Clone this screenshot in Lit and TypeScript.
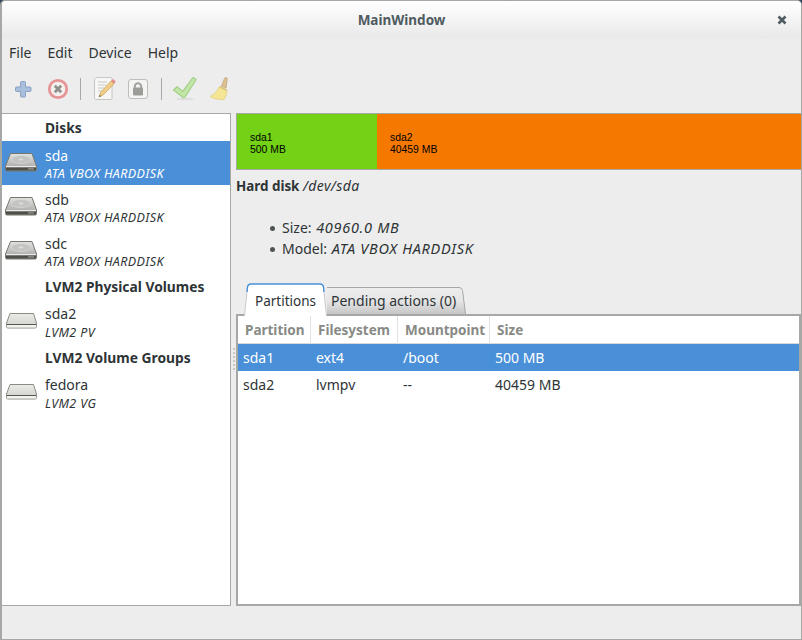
import { LitElement, html, css, svg } from 'lit';
import { customElement } from 'lit/decorators.js';

interface SideRow {
  name?: string;
  sub?: string;
  header?: string;
  icon?: 'disk' | 'volume';
  selected?: boolean;
}

const SIDE_ROWS: SideRow[] = [
  { header: 'Disks' },
  { name: 'sda', sub: 'ATA VBOX HARDDISK', icon: 'disk', selected: true },
  { name: 'sdb', sub: 'ATA VBOX HARDDISK', icon: 'disk' },
  { name: 'sdc', sub: 'ATA VBOX HARDDISK', icon: 'disk' },
  { header: 'LVM2 Physical Volumes' },
  { name: 'sda2', sub: 'LVM2 PV', icon: 'volume' },
  { header: 'LVM2 Volume Groups' },
  { name: 'fedora', sub: 'LVM2 VG', icon: 'volume' },
];

const diskIcon = html`<svg width="34" height="22" viewBox="0 0 34 22">
  <defs>
    <linearGradient id="dg" x1="0" y1="0" x2="0" y2="1">
      <stop offset="0" stop-color="#e2e3e0" />
      <stop offset="0.7" stop-color="#b4b5b2" />
      <stop offset="1" stop-color="#9c9d9a" />
    </linearGradient>
  </defs>
  <path d="M6.500 1.500H28L32.500 14v3.500a1.500 1.500 0 0 1-1.500 1.500H3a1.500 1.500 0 0 1-1.500-1.500V14z" fill="url(#dg)" stroke="#74766f" stroke-width="1" />
  <rect x="2" y="14" width="30" height="1" fill="#ebebe9" />
  <rect x="2" y="15.500" width="30" height="3" fill="#4d4f49" />
  <rect x="24" y="16.200" width="6" height="1.400" fill="#8f918c" />
  <ellipse cx="17" cy="7.500" rx="9.500" ry="4" fill="#c4c5c2" stroke="#dcdcda" stroke-width="0.600" />
  <ellipse cx="17" cy="7.500" rx="2.500" ry="1" fill="#dcdcda" />
</svg>`;

const volumeIcon = html`<svg width="34" height="22" viewBox="0 0 34 22">
  <defs>
    <linearGradient id="vg" x1="0" y1="0" x2="0" y2="1">
      <stop offset="0" stop-color="#ebebe7" />
      <stop offset="1" stop-color="#cfd0ca" />
    </linearGradient>
  </defs>
  <path d="M6 2.500h23.500l3 9.500v3.500a1.500 1.500 0 0 1-1.500 1.500H4a1.500 1.500 0 0 1-1.500-1.500V12z" fill="url(#vg)" stroke="#8b8c85" stroke-width="1" />
  <rect x="3" y="13" width="29" height="1" fill="#55574f" />
  <rect x="3" y="14" width="29" height="2.500" fill="#f2f2ef" />
</svg>`;

const plusIcon = svg`<path d="M9.500 3.500h3a1 1 0 0 1 1 1v4.500H18a1 1 0 0 1 1 1v2.500a1 1 0 0 1-1 1h-4.500V18a1 1 0 0 1-1 1h-3a1 1 0 0 1-1-1v-4.500H4.500a1 1 0 0 1-1-1V10a1 1 0 0 1 1-1h4V4.500a1 1 0 0 1 1-1z" fill="#a9bfdc" stroke="#88a2c2" stroke-width="1"/>`;

const stopIcon = svg`<circle cx="12" cy="11" r="8.700" fill="#f3f0ee" stroke="#e79496" stroke-width="2.800"/>
  <path d="M8.800 7.800l6.400 6.400M15.200 7.800l-6.400 6.400" stroke="#8f908d" stroke-width="2.800" fill="none"/>`;

const noteIcon = svg`<path d="M3.500 -0.500h14.500a1 1 0 0 1 1 1v20a1 1 0 0 1-1 1H2.500a1 1 0 0 1-1-1V1.500z" fill="#f6f6f4" stroke="#c6c6c2" stroke-width="1"/>
  <path d="M5 4h9M5 7h8M5 10h6M5 13h4" stroke="#cacac7" stroke-width="1" fill="none"/>
  <path d="M6 19l1.500-4.500L18 3l3 3-11 11z" fill="#f0cd86" stroke="#c59f5c" stroke-width="0.700"/>
  <path d="M18 3l1-1.200a1.300 1.300 0 0 1 2 0l1 1a1.300 1.300 0 0 1 0 2L21 6z" fill="#e58c8c"/>
  <path d="M6 19l.7-2.200 1.500 1.400z" fill="#6d6d6a"/>`;

const lockIcon = svg`<rect x="1.500" y="1.500" width="19" height="19" rx="2.500" fill="#f4f4f2" stroke="#bdbdb9" stroke-width="1"/>
  <path d="M7.800 10V8.500a3.200 3.200 0 0 1 6.400 0V10" fill="none" stroke="#a2a39f" stroke-width="2"/>
  <rect x="6" y="9.500" width="10" height="8" rx="1" fill="#9c9d99"/>`;

const checkIcon = svg`<ellipse cx="11" cy="21" rx="9" ry="1.300" fill="#dedede"/>
  <path d="M-0.500 12L3 8.800l5.800 4.500L18.500 0a1 1 0 0 1 1.400-.2l1.600 1.300a1 1 0 0 1 .2 1.400L11 19a1.500 1.500 0 0 1-2.200.3z" fill="#c2e5a8" stroke="#a3d089" stroke-width="1.200" stroke-linejoin="round"/>`;

const broomIcon = svg`<path d="M13.500 8l3-7.500a1.400 1.400 0 0 1 2.700.8L18 10z" fill="#dcc094" stroke="#c3a579" stroke-width="0.800"/>
  <path d="M11.500 8.500l7.500 3.500c0 3-1 7-3 9.300-5 .4-10-.3-14-2.800 4-1.500 7-5.500 9.500-10z" fill="#f4e694" stroke="#dfcf7c" stroke-width="0.800"/>
  <path d="M12 8l7 3.500-.7 1.600-7-3.500z" fill="#d8c47f"/>`;

@customElement('app-root')
export class AppRoot extends LitElement {
  static styles = css`
    :host {
      display: block;
      width: 802px;
      height: 640px;
      overflow: hidden;
      font-family: 'Noto Sans', 'Open Sans', sans-serif;
      font-size: 14px;
      color: #2e3436;
      background: #33475c;
    }

    .window {
      box-sizing: border-box;
      height: 640px;
      display: flex;
      flex-direction: column;
      border: 1px solid #a5a8a5;
      border-left-width: 2px;
      border-radius: 5px 5px 0 0;
      background: #ededed;
    }

    .titlebar {
      position: relative;
      height: 37px;
      flex: none;
      display: flex;
      align-items: center;
      justify-content: center;
      background: linear-gradient(#ffffff, #e9e9e9);
      border-radius: 4px 4px 0 0;
      font-weight: 700;
      font-size: 13.5px;
      color: #4e5b61;
    }
    .close {
      position: absolute;
      right: 14px;
      top: 14px;
      width: 10px;
      height: 10px;
    }

    .menubar {
      height: 32px;
      flex: none;
      display: flex;
      align-items: center;
      gap: 16px;
      padding-left: 7px;
      padding-bottom: 3px;
      box-sizing: border-box;
    }

    .toolbar {
      height: 40px;
      flex: none;
      box-sizing: border-box;
      display: flex;
      align-items: center;
      padding-left: 10px;
      padding-bottom: 2px;
      gap: 12px;
    }
    .toolbar svg {
      width: 22px;
      height: 22px;
      display: block;
      overflow: visible;
    }
    .sep {
      width: 1px;
      height: 22px;
      background: #a8a9a6;
    }

    .main {
      flex: 1;
      display: flex;
      min-height: 0;
      padding-top: 3px;
      padding-bottom: 33px;
    }

    .side {
      width: 229px;
      flex: none;
      box-sizing: border-box;
      background: #fff;
      border: 1px solid #a5a8a5;
      border-left: 0;
      margin-right: 5px;
    }
    .group {
      height: 27px;
      display: flex;
      align-items: center;
      padding-left: 43px;
      font-weight: 700;
      font-size: 13.800px;
    }
    .item {
      height: 44px;
      display: flex;
      align-items: center;
      box-sizing: border-box;
    }
    .item.selected {
      background: #4a90d9;
      color: #fff;
    }
    .icon {
      width: 43px;
      flex: none;
      padding-left: 2px;
      box-sizing: border-box;
      display: flex;
    }
    .name {
      line-height: 20px;
    }
    .sub {
      font-size: 12.500px;
      letter-spacing: 0.400px;
      font-style: italic;
      line-height: 17px;
    }
    .item.disk .text {
      align-self: flex-start;
      padding-top: 5px;
    }
    .item.disk .sub {
      line-height: 15px;
    }

    .content {
      flex: 1;
      min-width: 0;
      display: flex;
      flex-direction: column;
      position: relative;
    }
    .grip {
      position: absolute;
      left: -3px;
      top: 235px;
      width: 2px;
      height: 22px;
      background: repeating-linear-gradient(#c6c6c6 0 2px, transparent 2px 4px);
    }

    .diskbar {
      height: 57px;
      flex: none;
      display: flex;
      box-sizing: border-box;
      border: 1px solid #a5a8a5;
      border-right: 0;
      color: #000;
      font-family: 'Liberation Sans', sans-serif;
      font-size: 10.400px;
      line-height: 12px;
    }
    .part {
      display: flex;
      flex-direction: column;
      justify-content: center;
      padding: 4px 0 0 13px;
      box-sizing: border-box;
    }
    .part div {
      height: 12px;
    }
    .p1 {
      width: 140px;
      background: #73d216;
    }
    .p2 {
      flex: 1;
      background: #f57900;
    }

    .title {
      margin-top: 6px;
      line-height: 20px;
      font-size: 13.400px;
    }
    .title b {
      font-weight: 700;
    }
    .title i {
      font-size: 14px;
      letter-spacing: 0.400px;
    }
    .facts {
      margin: 21px 0 0;
      padding: 0 0 0 46px;
      line-height: 21px;
      list-style: none;
    }
    .facts li::before {
      content: '';
      display: inline-block;
      width: 5px;
      height: 5px;
      border-radius: 50%;
      background: #4f5557;
      margin: 0 7px 2px -12px;
      vertical-align: middle;
    }
    .facts i {
      font-size: 14.500px;
      letter-spacing: 0.700px;
      margin-left: 1px;
    }

    .tabs {
      display: flex;
      margin-top: 24px;
      padding-left: 8px;
      height: 31px;
      flex: none;
      align-items: flex-end;
      position: relative;
      z-index: 1;
    }
    .tab {
      position: relative;
      box-sizing: border-box;
      display: flex;
      align-items: center;
      white-space: nowrap;
    }
    .tab svg {
      position: absolute;
      left: 0;
      top: 0;
    }
    .tab span {
      position: relative;
    }
    .tab.on {
      height: 33px;
      width: 83px;
      margin-bottom: -2px;
      padding: 3px 0 0 11px;
      font-size: 13.500px;
    }
    .tab.off {
      height: 27px;
      width: 139px;
      padding-left: 4px;
    }

    .table {
      flex: 1;
      min-height: 0;
      box-sizing: border-box;
      background: #fff;
      border: 2px solid #a5a8a5;
    }
    .thead,
    .tr {
      display: grid;
      grid-template-columns: 73px 87px 92px 1fr;
      align-items: center;
    }
    .thead {
      height: 28px;
      box-sizing: border-box;
      border-bottom: 1px solid #d8d8d8;
      font-weight: 700;
      font-size: 13.500px;
      color: #888a85;
    }
    .thead span {
      line-height: 27px;
      padding: 1px 0 0 7px;
      border-right: 1px solid #e2e2e2;
    }
    .thead span:last-child {
      border-right: 0;
    }
    .tr {
      height: 27px;
    }
    .tr span {
      padding-left: 5px;
    }
    .tr.selected {
      background: #4a90d9;
      color: #fff;
    }
  `;

  private renderRow(r: SideRow) {
    if (r.header) {
      return html`<div class="group">${r.header}</div>`;
    }
    const cls = `item ${r.selected ? 'selected' : ''} ${r.icon === 'disk' ? 'disk' : ''}`;
    return html`<div class=${cls}>
      <div class="icon">${r.icon === 'disk' ? diskIcon : volumeIcon}</div>
      <div class="text">
        <div class="name">${r.name}</div>
        <div class="sub">${r.sub}</div>
      </div>
    </div>`;
  }

  render() {
    return html`
      <div class="window">
        <div class="titlebar">
          MainWindow
          <svg class="close" viewBox="0 0 10 10">
            <path d="M1.500 1.500l7 7M8.500 1.500l-7 7" stroke="#4e5b61" stroke-width="2.600" />
          </svg>
        </div>
        <div class="menubar">
          <span>File</span><span>Edit</span><span>Device</span><span>Help</span>
        </div>
        <div class="toolbar">
          <svg viewBox="0 0 22 22">${plusIcon}</svg>
          <svg viewBox="0 0 22 22">${stopIcon}</svg>
          <div class="sep"></div>
          <svg viewBox="0 0 22 22">${noteIcon}</svg>
          <svg viewBox="0 0 22 22">${lockIcon}</svg>
          <div class="sep"></div>
          <svg viewBox="0 0 22 22">${checkIcon}</svg>
          <svg viewBox="0 0 22 22">${broomIcon}</svg>
        </div>
        <div class="main">
          <div class="side">${SIDE_ROWS.map((r) => this.renderRow(r))}</div>
          <div class="content">
            <div class="grip"></div>
            <div class="diskbar">
              <div class="part p1"><div>sda1</div><div>500 MB</div></div>
              <div class="part p2"><div>sda2</div><div>40459 MB</div></div>
            </div>
            <div class="title"><b>Hard disk</b> <i>/dev/sda</i></div>
            <ul class="facts">
              <li>Size: <i>40960.0 MB</i></li>
              <li>Model: <i>ATA VBOX HARDDISK</i></li>
            </ul>
            <div class="tabs">
              <div class="tab on">
                <svg width="83" height="33" viewBox="0 0 83 33">
                  <path d="M0.500 33L3.500 4Q4 1 7 1H76Q79 1 79.500 4L82.500 33" fill="#fff" />
                  <path d="M0.500 33L3.500 4" fill="none" stroke="#c9cbc9" />
                  <path d="M82.500 33L79.500 4" fill="none" stroke="#c9cbc9" />
                  <path d="M3 9L3.500 4Q4 1 7 1H76Q79 1 79.500 4L80 9" fill="none" stroke="#4a90d9" stroke-width="1.400" />
                </svg>
                <span>Partitions</span>
              </div>
              <div class="tab off">
                <svg width="139" height="27" viewBox="0 0 139 27">
                  <defs>
                    <linearGradient id="tg" x1="0" y1="0" x2="0" y2="1">
                      <stop offset="0" stop-color="#ededed" />
                      <stop offset="0.5" stop-color="#e6e6e6" />
                      <stop offset="1" stop-color="#c6c6c6" />
                    </linearGradient>
                  </defs>
                  <path d="M-2 .5H132Q135 .5 135.500 3.500L138.500 27H0z" fill="url(#tg)" />
                  <path d="M-2 .5H132Q135 .5 135.500 3.500L138.500 27" fill="none" stroke="#a5a8a5" />
                </svg>
                <span>Pending actions (0)</span>
              </div>
            </div>
            <div class="table">
              <div class="thead">
                <span>Partition</span><span>Filesystem</span><span>Mountpoint</span><span>Size</span>
              </div>
              <div class="tr selected">
                <span>sda1</span><span>ext4</span><span>/boot</span><span>500 MB</span>
              </div>
              <div class="tr">
                <span>sda2</span><span>lvmpv</span><span>--</span><span>40459 MB</span>
              </div>
            </div>
          </div>
        </div>
      </div>
    `;
  }
}
